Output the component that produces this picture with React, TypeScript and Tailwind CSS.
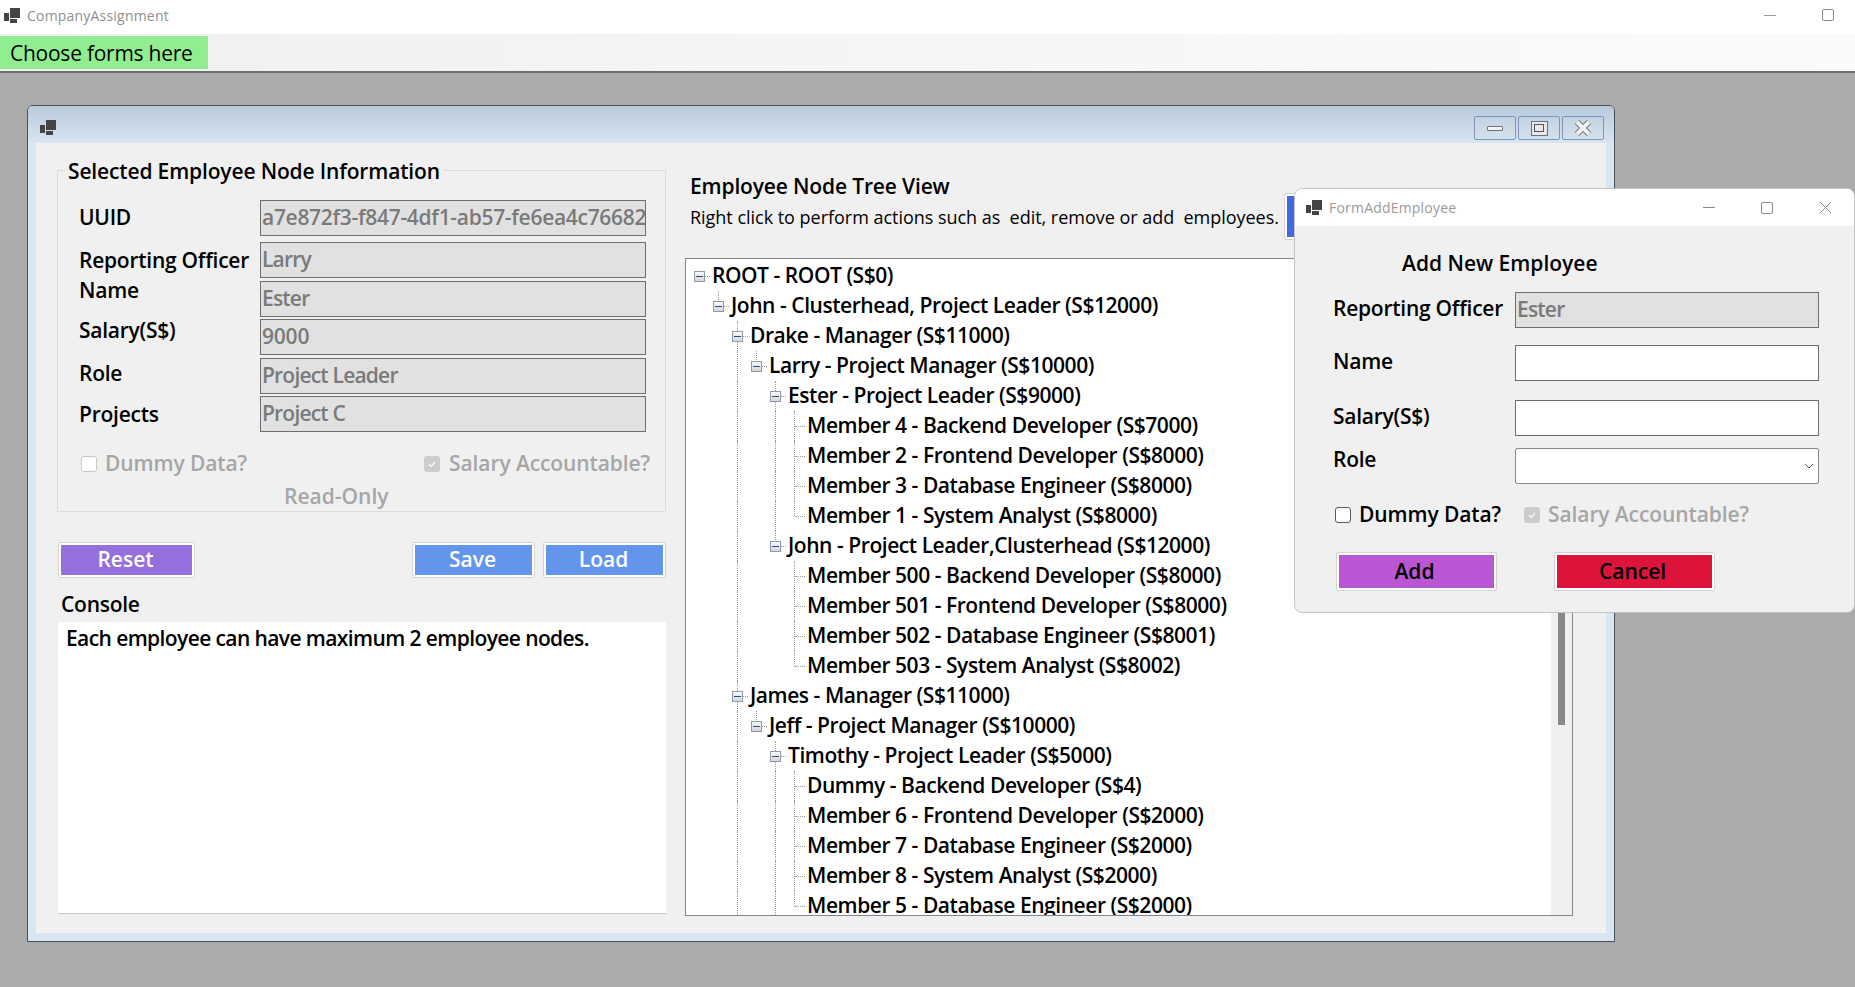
import React from "react"

const font = "font-['Open_Sans','Noto_Sans',sans-serif]"

type TreeNode = { text: string; children?: TreeNode[]; more?: boolean }

const members = (items: string[]): TreeNode[] => items.map((text) => ({ text }))

const tree: TreeNode = {
  text: "ROOT - ROOT (S$0)",
  children: [
    {
      text: "John - Clusterhead, Project Leader (S$12000)",
      children: [
        {
          text: "Drake - Manager (S$11000)",
          children: [
            {
              text: "Larry - Project Manager (S$10000)",
              children: [
                {
                  text: "Ester - Project Leader (S$9000)",
                  children: members([
                    "Member 4 - Backend Developer (S$7000)",
                    "Member 2 - Frontend Developer (S$8000)",
                    "Member 3 - Database Engineer (S$8000)",
                    "Member 1 - System Analyst (S$8000)",
                  ]),
                },
                {
                  text: "John - Project Leader,Clusterhead (S$12000)",
                  children: members([
                    "Member 500 - Backend Developer (S$8000)",
                    "Member 501 - Frontend Developer (S$8000)",
                    "Member 502 - Database Engineer (S$8001)",
                    "Member 503 - System Analyst (S$8002)",
                  ]),
                },
              ],
            },
          ],
        },
        {
          text: "James - Manager (S$11000)",
          more: true,
          children: [
            {
              text: "Jeff - Project Manager (S$10000)",
              children: [
                {
                  text: "Timothy - Project Leader (S$5000)",
                  more: true,
                  children: members([
                    "Dummy - Backend Developer (S$4)",
                    "Member 6 - Frontend Developer (S$2000)",
                    "Member 7 - Database Engineer (S$2000)",
                    "Member 8 - System Analyst (S$2000)",
                    "Member 5 - Database Engineer (S$2000)",
                  ]),
                },
              ],
            },
          ],
        },
      ],
    },
  ],
}

type Row = { text: string; depth: number; hasBox: boolean; guides: boolean[]; next: boolean }

// walk the tree, guides = which ancestor levels keep their dotted line through this row
function flatten(node: TreeNode, depth: number, guides: boolean[], next: boolean, out: Row[]) {
  out.push({ text: node.text, depth, hasBox: !!node.children, guides, next })
  const kids = node.children ?? []
  kids.forEach((kid, i) => {
    flatten(kid, depth + 1, [...guides, next], i < kids.length - 1 || !!kid.more, out)
  })
}

const rows: Row[] = []
flatten(tree, 0, [], false, rows)

function AppIcon() {
  return (
    <svg width="16" height="15" viewBox="0 0 16 15" className="shrink-0">
      <rect x="0" y="5" width="5" height="8" fill="#444" />
      <rect x="6" y="0" width="10" height="10" fill="#444" />
      <rect x="6" y="11" width="7" height="4" fill="#444" />
    </svg>
  )
}

function TreeRow({ row }: { row: Row }) {
  return (
    <div className="flex h-[30px] items-center whitespace-nowrap pl-[4px]">
      {row.guides.map((on, i) => (
        <div key={i} className="flex h-full w-[19px] shrink-0 justify-center">
          {on && <div className="h-full border-l border-dotted border-[#9a9a9a]" />}
        </div>
      ))}
      <div className="relative flex h-full w-[19px] shrink-0 items-center justify-center">
        {row.depth > 0 && (
          <div
            className={
              row.next
                ? "absolute left-[9px] top-0 h-full border-l border-dotted border-[#9a9a9a]"
                : "absolute left-[9px] top-0 h-[15px] border-l border-dotted border-[#9a9a9a]"
            }
          />
        )}
        <div className="absolute left-[10px] top-[15px] w-[10px] border-t border-dotted border-[#9a9a9a]" />
        {row.hasBox && (
          <div className="relative flex h-[11px] w-[11px] items-center justify-center border border-[#8f9aa8] bg-gradient-to-b from-[#fafafa] to-[#d6d6d6]">
            <div className="h-px w-[7px] bg-[#2b4a9c]" />
          </div>
        )}
      </div>
      <span className="ml-[3px] text-[21px] font-semibold tracking-[-0.45px] text-black">{row.text}</span>
    </div>
  )
}

function ReadOnlyBox({ value, className }: { value: string; className?: string }) {
  return (
    <div
      className={`flex h-[36px] items-center overflow-hidden whitespace-nowrap border border-[#6e6e6e] bg-[#e1e1e1] pl-[1px] text-[21px] font-semibold text-[#7a7a7a] ${className ?? ""}`}
    >
      {value}
    </div>
  )
}

function Check({ checked, dim }: { checked?: boolean; dim?: boolean }) {
  if (checked) {
    return (
      <div className="flex h-[16px] w-[16px] shrink-0 items-center justify-center rounded-[3px] bg-[#cccccc]">
        <svg width="10" height="10" viewBox="0 0 10 10" fill="none" stroke="#ffffff" strokeWidth="1.2">
          <path d="M2 5.2 L4.2 7.4 L8 2.8" />
        </svg>
      </div>
    )
  }
  return (
    <div
      className={
        dim
          ? "h-[16px] w-[16px] shrink-0 rounded-[3px] border border-[#c8c8c8] bg-white"
          : "h-[16px] w-[16px] shrink-0 rounded-[3px] border border-[#5a5a5a] bg-white"
      }
    />
  )
}

function ColorButton({ label, className }: { label: string; className: string }) {
  return (
    <div className="rounded-[2px] border border-[#d4d4d4] bg-white p-[2px]">
      <div className={`flex h-full items-center justify-center text-[21px] font-semibold ${className}`}>{label}</div>
    </div>
  )
}

function MdiControl({ children }: { children: React.ReactNode }) {
  return (
    <div className="flex h-[24px] w-[42px] items-center justify-center rounded-[2px] border border-[#7f96b8] bg-gradient-to-b from-[#c3d2e2] to-[#d4e1ee]">
      {children}
    </div>
  )
}

export default function App() {
  return (
    <div className={`relative flex h-[987px] w-[1855px] flex-col overflow-hidden bg-[#ababab] ${font}`}>
      {/* app title bar */}
      <div className="flex h-[34px] shrink-0 items-center bg-white pb-[4px] pl-[4px]">
        <AppIcon />
        <span className="ml-[7px] text-[14px] tracking-[0.2px] text-[#8f8f8f]">CompanyAssignment</span>
        <div className="ml-auto flex items-center gap-[46px] pr-[21px]">
          <div className="h-px w-[12px] bg-[#9a9a9a]" />
          <div className="h-[12px] w-[12px] rounded-[2px] border border-[#8a8a8a]" />
        </div>
      </div>

      {/* menu strip */}
      <div className="flex h-[39px] shrink-0 items-start border-b-2 border-[#6d6d6d] bg-gradient-to-r from-[#f0f0f0] to-[#fbfbfb] pt-[2px]">
        <div className="flex h-[33px] w-[208px] items-center bg-[#90ee90] pl-[10px] pt-[2px] text-[21px] tracking-[-0.25px] text-black">
          Choose forms here
        </div>
      </div>

      {/* mdi child */}
      <div className="absolute left-[27px] top-[105px] flex h-[837px] w-[1588px] flex-col rounded-t-[6px] border border-[#4a5058] bg-[#d8e5f2] px-[8px] pb-[8px]">
        <div className="-mx-[8px] flex h-[37px] shrink-0 items-end rounded-t-[5px] bg-gradient-to-b from-[#b9cadb] to-[#d8e5f2] pb-[3px] pl-[12px] pr-[10px]">
          <div className="mb-[5px]">
            <AppIcon />
          </div>
          <div className="ml-auto flex gap-[2px]">
            <MdiControl>
              <div className="h-[5px] w-[16px] rounded-[1px] border border-[#6b7280] bg-[#f4f4f4]" />
            </MdiControl>
            <MdiControl>
              <div className="flex h-[15px] w-[17px] items-center justify-center border border-[#6b7280] bg-[#e8e8e8]">
                <div className="h-[8px] w-[10px] border border-[#4b5563]" />
              </div>
            </MdiControl>
            <MdiControl>
              <svg width="20" height="18" viewBox="0 0 20 18">
                <path d="M4 3 L16 15 M16 3 L4 15" stroke="#6b6b6b" strokeWidth="6" />
                <path d="M4 3 L16 15 M16 3 L4 15" stroke="#f0f0f0" strokeWidth="4" />
              </svg>
            </MdiControl>
          </div>
        </div>

        <div className="flex min-h-0 flex-1 bg-[#f0f0f0]">
          {/* left column */}
          <div className="ml-[21px] flex w-[609px] shrink-0 flex-col">
            <div className="relative mt-[27px] flex h-[342px] flex-col border border-[#dcdcdc]">
              <span className="absolute -top-[15px] left-[7px] bg-[#f0f0f0] px-[3px] text-[21px] font-semibold tracking-[-0.15px] text-black">
                Selected Employee Node Information
              </span>
              <div className="flex">
                <div className="ml-[21px] w-[181px] text-[21px] font-semibold tracking-[-0.25px] text-black">
                  <div className="mt-[31px] leading-[30px]">UUID</div>
                  <div className="mt-[13px] leading-[30px]">Reporting Officer</div>
                  <div className="leading-[30px]">Name</div>
                  <div className="mt-[10px] leading-[30px]">Salary(S$)</div>
                  <div className="mt-[13px] leading-[30px]">Role</div>
                  <div className="mt-[11px] leading-[30px]">Projects</div>
                </div>
                <div className="w-[386px]">
                  <ReadOnlyBox value="a7e872f3-f847-4df1-ab57-fe6ea4c76682" className="mt-[29px] tracking-[-0.3px]" />
                  <ReadOnlyBox value="Larry" className="mt-[6px] tracking-[-0.8px]" />
                  <ReadOnlyBox value="Ester" className="mt-[3px] tracking-[-0.8px]" />
                  <ReadOnlyBox value="9000" className="mt-[2px] tracking-[-0.2px]" />
                  <ReadOnlyBox value="Project Leader" className="mt-[3px] tracking-[-0.8px]" />
                  <ReadOnlyBox value="Project C" className="mt-[2px] tracking-[-0.8px]" />
                </div>
              </div>
              <div className="mt-[16px] flex items-center pl-[23px] pr-[15px] text-[21px] font-semibold tracking-[-0.1px] text-[#a6a6a6]">
                <Check dim />
                <span className="ml-[8px]">Dummy Data?</span>
                <div className="ml-auto flex items-center gap-[9px]">
                  <Check checked />
                  <span>Salary Accountable?</span>
                </div>
              </div>
              <div className="mt-[1px] pl-[226px] text-[21px] font-semibold text-[#a6a6a6]">Read-Only</div>
            </div>

            <div className="ml-[1px] mt-[30px] flex h-[36px] text-white">
              <ColorButton label="Reset" className="w-[131px] bg-[#9370db] pr-[2px] text-white" />
              <div className="ml-auto flex gap-[8px]">
                <ColorButton label="Save" className="w-[117px] bg-[#6495ed] pr-[2px] text-white" />
                <ColorButton label="Load" className="w-[117px] bg-[#6495ed] pr-[2px] text-white" />
              </div>
            </div>

            <div className="ml-[4px] mt-[12px] text-[21px] font-semibold leading-[28px] tracking-[-0.25px] text-black">Console</div>
            <div className="ml-[1px] mt-[4px] h-[292px] border-b border-[#c8c8c8] bg-white pl-[8px] pt-[2px] text-[21px] font-semibold leading-[28px] tracking-[-0.6px] text-black">
              Each employee can have maximum 2 employee nodes.
            </div>
          </div>

          {/* right column */}
          <div className="ml-[19px] flex min-w-0 flex-1 flex-col">
            <div className="ml-[5px] mt-[29px] text-[21px] font-semibold leading-[28px] tracking-[-0.15px] text-black">
              Employee Node Tree View
            </div>
            <div className="mb-[27px] ml-[5px] mt-[3px] flex h-[28px] items-center whitespace-nowrap text-[18px] tracking-[-0.025px] text-black">
              Right click to perform actions such as&nbsp; edit, remove or add&nbsp; employees.
            </div>
            <div className="flex h-[658px] w-[888px] overflow-hidden border border-[#7f8790] bg-white">
              <div className="min-w-0 flex-1 overflow-hidden pt-[2px]">
                {rows.map((row) => (
                  <TreeRow key={row.text} row={row} />
                ))}
              </div>
              <div className="flex w-[21px] shrink-0 justify-center bg-[#f0f0f0]">
                <div className="h-[466px] w-[7px] bg-[#888888]" />
              </div>
            </div>
          </div>
        </div>
      </div>

      {/* blue button behind the dialog */}
      <div className="absolute left-[1284px] top-[193px] h-[47px] w-[40px] rounded-[2px] border border-[#d4d4d4] bg-white p-[2px]">
        <div className="h-full bg-[#4169e1]" />
      </div>

      {/* add employee dialog */}
      <div className="absolute left-[1294px] top-[188px] flex h-[425px] w-[561px] flex-col overflow-hidden rounded-[8px] border border-[#c4c4c4] bg-[#f0f0f0]">
        <div className="flex h-[37px] shrink-0 items-center bg-white pl-[11px]">
          <AppIcon />
          <span className="ml-[7px] text-[14px] tracking-[0.2px] text-[#9a9a9a]">FormAddEmployee</span>
          <div className="ml-auto flex items-center gap-[46px] pr-[22px]">
            <div className="h-px w-[12px] bg-[#8a8a8a]" />
            <div className="h-[12px] w-[12px] rounded-[2px] border border-[#8a8a8a]" />
            <svg width="13" height="13" viewBox="0 0 13 13" stroke="#8a8a8a" strokeWidth="1">
              <path d="M1 1 L12 12 M12 1 L1 12" />
            </svg>
          </div>
        </div>

        <div className="ml-[107px] mt-[23px] text-[21px] font-semibold leading-[28px] text-black">
          Add New Employee
        </div>

        <div className="flex text-[21px] font-semibold tracking-[-0.25px] text-black">
          <div className="ml-[38px] w-[182px]">
            <div className="mt-[17px] leading-[28px]">Reporting Officer</div>
            <div className="mt-[25px] leading-[28px]">Name</div>
            <div className="mt-[27px] leading-[28px]">Salary(S$)</div>
            <div className="mt-[15px] leading-[28px]">Role</div>
          </div>
          <div className="w-[304px]">
            <ReadOnlyBox value="Ester" className="mt-[15px] tracking-[-0.8px]" />
            <div className="mt-[17px] h-[36px] border border-[#6e6e6e] bg-white" />
            <div className="mt-[19px] h-[36px] border border-[#6e6e6e] bg-white" />
            <div className="mt-[12px] flex h-[36px] items-center justify-end rounded-[2px] border border-[#8a8a8a] bg-white pr-[4px]">
              <svg width="10" height="6" viewBox="0 0 10 6" fill="none" stroke="#555555" strokeWidth="1">
                <path d="M1 1 L5 5 L9 1" />
              </svg>
            </div>
          </div>
        </div>

        <div className="ml-[40px] mt-[17px] flex h-[28px] items-center text-[21px] font-semibold tracking-[-0.1px]">
          <Check />
          <span className="ml-[8px] text-black">Dummy Data?</span>
          <div className="ml-[23px] flex items-center gap-[8px] text-[#a6a6a6]">
            <Check checked />
            <span>Salary Accountable?</span>
          </div>
        </div>

        <div className="ml-[41px] mt-[23px] flex h-[39px] gap-[57px] text-black">
          <ColorButton label="Add" className="w-[155px] bg-[#ba55d3] pr-[4px] text-black" />
          <ColorButton label="Cancel" className="w-[155px] bg-[#dc143c] pr-[4px] text-black" />
        </div>
      </div>
    </div>
  )
}
